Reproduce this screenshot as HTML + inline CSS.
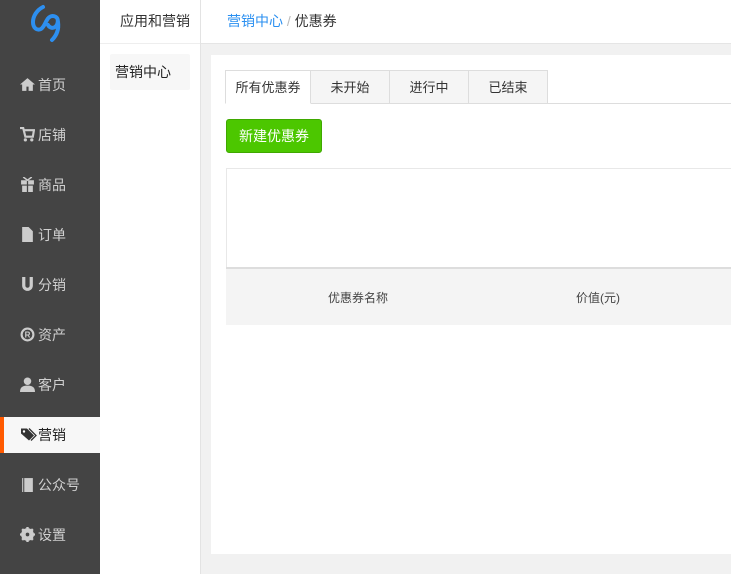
<!DOCTYPE html>
<html><head><meta charset="utf-8"><style>
*{margin:0;padding:0;box-sizing:border-box}
body{width:731px;height:574px;overflow:hidden;font-family:"Liberation Sans","Noto Sans CJK SC",sans-serif;font-size:13px;color:#333;background:#f1f1f1;position:relative}
.side{position:absolute;left:0;top:0;width:100px;height:574px;background:#444}
.item{position:absolute;left:0;width:100px;height:36px;line-height:36px;color:#d0d0d0;font-size:14px;padding-left:20px}
.item svg{position:absolute;left:20px;top:10px}
.item span{position:absolute;left:38px}
.item.act{background:#f7f7f7;color:#222;border-left:4px solid #ff5a00}
.col2{position:absolute;left:100px;top:0;width:101px;height:574px;background:#fff;border-right:1px solid #e3e3e3}
.hdr{position:absolute;left:201px;top:0;width:530px;height:44px;background:#fff;border-bottom:1px solid #e5e5e5}
.panel{position:absolute;left:211px;top:55px;width:520px;height:499px;background:#fff}
.tabs{position:absolute;left:14px;top:15px;width:506px;height:34px;border-bottom:1px solid #ddd}
.tab{position:absolute;top:0;height:34px;line-height:33px;text-align:center;background:#f5f5f5;border:1px solid #ddd;border-left:none;font-size:13px;color:#333}
.tab.a{background:#fff;border-bottom-color:#fff;border-left:1px solid #ddd}
.btn{position:absolute;left:15px;top:64px;width:96px;height:34px;background:#4cc700;border:1px solid #3fa800;border-radius:3px;color:#fff;font-size:14px;line-height:32px;text-align:center}
.box{position:absolute;left:15px;top:113px;width:510px;height:101px;border:1px solid #e8e8e8;border-bottom:none}
.th{position:absolute;left:15px;top:212px;width:505px;height:58px;background:#f4f4f4;border-top:2px solid #ddd;font-size:12px;color:#444}
</style></head><body>
<div class="side">
<svg style="position:absolute;left:0;top:0" width="100" height="48" viewBox="0 0 100 48"><g fill="none" stroke="#2d8ff0" stroke-width="4" stroke-linecap="round"><path d="M43 7 C37 10 33 16 33 22 C33 28 37 31 41 29 C44 27 45 23 47 20 C49 16 53 15 56 17 C59 19 58 25 55 27 C52 29 49 27 48 25"/><path d="M58 22 C59 29 57 35 52 40"/></g></svg>
<div class="item" style="top:67px"><svg width="15" height="15" viewBox="0 0 14 14"><path d="M7 1L0 7h2v6h4V9h2v4h4V7h2z" fill="#ccc"/></svg><span>首页</span></div>
<div class="item" style="top:117px"><svg width="15" height="15" viewBox="0 0 14 14"><path d="M0 1h3l2 8h7l1-6H4" fill="none" stroke="#ccc" stroke-width="2"/><circle cx="5" cy="12" r="1.5" fill="#ccc"/><circle cx="11" cy="12" r="1.5" fill="#ccc"/></svg><span>店铺</span></div>
<div class="item" style="top:167px"><svg width="15" height="15" viewBox="0 0 14 14"><path d="M1 3h12v4H1zM2 8h10v6H2z" fill="#ccc"/><path d="M7 3v11" stroke="#444" stroke-width="1.2"/><path d="M3 0l4 3 4-3" fill="none" stroke="#ccc" stroke-width="1.4"/></svg><span>商品</span></div>
<div class="item" style="top:217px"><svg width="15" height="15" viewBox="0 0 14 14"><path d="M2 0h6l4 4v10H2z" fill="#ccc"/></svg><span>订单</span></div>
<div class="item" style="top:267px"><svg width="15" height="15" viewBox="0 0 14 14"><path d="M2 0h3v8a2 2 0 004 0V0h3v8a5 5 0 01-10 0z" fill="#ccc"/></svg><span>分销</span></div>
<div class="item" style="top:317px"><svg width="15" height="15" viewBox="0 0 14 14"><circle cx="7" cy="7" r="5.5" fill="none" stroke="#ccc" stroke-width="2"/><text x="7" y="10" font-size="7.5" font-weight="bold" text-anchor="middle" fill="#ccc" font-family="Liberation Sans">R</text></svg><span>资产</span></div>
<div class="item" style="top:367px"><svg width="15" height="15" viewBox="0 0 14 14"><circle cx="7" cy="4" r="3.5" fill="#ccc"/><path d="M0 14c0-5 3-6 7-6s7 1 7 6z" fill="#ccc"/></svg><span>客户</span></div>
<div class="item act" style="top:417px;padding-left:16px"><svg style="left:16px" width="18" height="15" viewBox="0 0 18 14"><path d="M1 1h6l7 7-5 5-8-7z" fill="#333"/><circle cx="4" cy="4" r="1.2" fill="#fff"/><path d="M9 1l7 7-5 5" fill="none" stroke="#333" stroke-width="1.3"/></svg><span style="left:34px">营销</span></div>
<div class="item" style="top:467px"><svg width="15" height="15" viewBox="0 0 14 14"><path d="M2 1h10v13H2z" fill="#ccc"/><path d="M3.5 1v13" stroke="#444"/></svg><span>公众号</span></div>
<div class="item" style="top:517px"><svg width="15" height="15" viewBox="0 0 14 14"><circle cx="7" cy="7" r="4.5" fill="none" stroke="#ccc" stroke-width="3"/><path d="M7 0v14M0 7h14M2 2l10 10M12 2L2 12" stroke="#ccc" stroke-width="2.2"/><circle cx="7" cy="7" r="1.7" fill="#444"/></svg><span>设置</span></div>
</div>
<div class="col2">
<div style="position:absolute;left:20px;top:11px;font-size:14px;color:#333">应用和营销</div>
<div style="position:absolute;left:0;top:43px;width:100px;border-top:1px solid #eee"></div>
<div style="position:absolute;left:10px;top:54px;width:80px;height:36px;background:#f7f7f7;border-radius:2px;font-size:14px;line-height:36px;padding-left:5px;color:#222">营销中心</div>
</div>
<div class="hdr"><div style="position:absolute;left:26px;top:11px;font-size:14px"><span style="color:#2a8ff0">营销中心</span> <span style="color:#bbb">/</span> <span style="color:#333">优惠券</span></div></div>
<div class="panel">
<div class="tabs">
<div class="tab a" style="left:0;width:86px">所有优惠券</div>
<div class="tab" style="left:86px;width:79px">未开始</div>
<div class="tab" style="left:165px;width:79px">进行中</div>
<div class="tab" style="left:244px;width:79px">已结束</div>
</div>
<div class="btn">新建优惠券</div>
<div class="box"></div>
<div class="th"><span style="position:absolute;left:102px;top:20px">优惠券名称</span><span style="position:absolute;left:350px;top:20px">价值(元)</span></div>
</div>
</body></html>
